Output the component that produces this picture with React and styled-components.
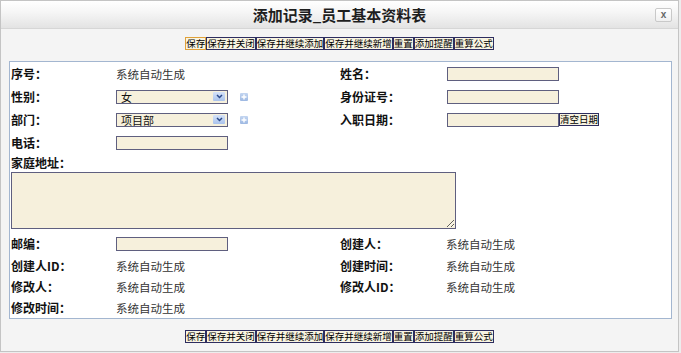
import React from "react";
import styled, { createGlobalStyle } from "styled-components";

const GlobalStyle = createGlobalStyle`
  html, body { margin: 0; padding: 0; background: #ededed; }
  body { font-family: "Noto Sans CJK SC", "Noto Sans", sans-serif; }
  * { box-sizing: border-box; }
`;

const Dialog = styled.div`
  width: 679px;
  height: 352px;
  border: 1px solid #c4c4c4;
  background: #f4f4f4;
  display: flex;
  flex-direction: column;
`;

const TitleBar = styled.div`
  flex: none;
  height: 28px;
  display: grid;
  grid-template-columns: 1fr auto 1fr;
  align-items: center;
  background: linear-gradient(#ffffff 0%, #f6f6f6 40%, #e3e3e3 100%);
  border-bottom: 1px solid #d6d6d6;
`;

const Title = styled.div`
  grid-column: 2;
  font-size: 15px;
  font-weight: 700;
  color: #1e1e1e;
  line-height: 1;
`;

const CloseButton = styled.div`
  grid-column: 3;
  justify-self: end;
  margin-right: 6px;
  width: 17px;
  height: 14px;
  border: 1px solid #c9c9c9;
  border-radius: 2px;
  background: linear-gradient(#ffffff, #f0f0f0);
  display: flex;
  align-items: center;
  justify-content: center;
  font-family: "Liberation Sans", sans-serif;
  font-size: 10px;
  font-weight: 700;
  color: #666;
  line-height: 1;
`;

const ButtonBar = styled.div`
  flex: none;
  display: flex;
  justify-content: center;
  margin-top: ${(p) => p.$top}px;
  height: 13px;
`;

const ToolButton = styled.button`
  height: 13px;
  margin: 0;
  padding: 0;
  border: 1px solid ${(p) => (p.$focus ? "#e0a13a" : "#2d2d5f")};
  background: #f8f4e1;
  color: #000;
  font-family: "Noto Sans CJK SC", sans-serif;
  font-size: 9.5px;
  line-height: 11px;
  white-space: nowrap;
`;

const Panel = styled.div`
  flex: none;
  margin: 11px 6px 0 8px;
  height: 258px;
  border: 1px solid #a3b6d0;
  background: #ffffff;
  padding-left: 1px;
`;

const Row = styled.div`
  display: grid;
  grid-template-columns: 105px 224px 106px 1fr;
  align-items: ${(p) => p.$align || "center"};
  height: ${(p) => p.$h}px;
`;

const Label = styled.span`
  font-size: 12px;
  font-weight: 700;
  color: #111;
  line-height: 14px;
  white-space: nowrap;
`;

const Value = styled.span`
  font-size: 11.5px;
  color: #333;
  line-height: 14px;
  white-space: nowrap;
`;

const TextInput = styled.input`
  display: block;
  width: 112px;
  height: 14px;
  margin: 0 0 0 ${(p) => p.$ml || 0}px;
  padding: 0 3px;
  border: 1px solid #5f5f7f;
  background: #f6f0dc;
  font-size: 11px;
`;

const FieldGroup = styled.div`
  display: flex;
  align-items: center;
  gap: ${(p) => p.$gap || 0}px;
  margin-left: ${(p) => p.$ml || 0}px;
`;

const SelectBox = styled.div`
  width: 112px;
  height: 14px;
  border: 1px solid #5f5f7f;
  background: #f6f0dc;
  display: flex;
  align-items: center;
  padding-left: 4px;
`;

const SelectText = styled.span`
  font-size: 11px;
  color: #111;
  line-height: 12px;
  flex: 1;
`;

const ArrowBox = styled.span`
  width: 12px;
  height: 9px;
  margin-right: 2px;
  border-radius: 1px;
  background: linear-gradient(#d6e3f9, #a9c2ec);
  display: flex;
  align-items: center;
  justify-content: center;
`;

const PlusIcon = styled.span`
  width: 8px;
  height: 8px;
  border-radius: 1px;
  background: linear-gradient(#c4d6f1, #9db8e2);
  display: flex;
  align-items: center;
  justify-content: center;
`;

const SmallButton = styled.button`
  height: 13px;
  margin: 0;
  padding: 0;
  border: 1px solid #2d2d5f;
  background: #f8f4e1;
  color: #000;
  font-family: "Noto Sans CJK SC", sans-serif;
  font-size: 9.5px;
  line-height: 11px;
  white-space: nowrap;
`;

const TextArea = styled.textarea`
  grid-column: 1 / -1;
  display: block;
  width: 445px;
  height: 57px;
  margin: 0;
  border: 1px solid #5f5f7f;
  background: #f6f0dc;
  resize: both;
`;

const buttons = ["保存", "保存并关闭", "保存并继续添加", "保存并继续新增", "重置", "添加提醒", "重算公式"];

function Buttons({ top, focusFirst }) {
  return (
    <ButtonBar $top={top}>
      {buttons.map((b, i) => (
        <ToolButton key={b} $focus={focusFirst && i === 0}>
          {b}
        </ToolButton>
      ))}
    </ButtonBar>
  );
}

function Select({ value }) {
  return (
    <FieldGroup $gap={12}>
      <SelectBox>
        <SelectText>{value}</SelectText>
        <ArrowBox>
          <svg width="7" height="5" viewBox="0 0 7 5">
            <path d="M1 1 L3.5 3.5 L6 1" fill="none" stroke="#2c4a8a" strokeWidth="1.5" />
          </svg>
        </ArrowBox>
      </SelectBox>
      <PlusIcon>
        <svg width="6" height="6" viewBox="0 0 6 6">
          <path d="M3 0.5 V5.5 M0.5 3 H5.5" stroke="#fff" strokeWidth="1.4" />
        </svg>
      </PlusIcon>
    </FieldGroup>
  );
}

export default function App() {
  return (
    <>
      <GlobalStyle />
      <Dialog>
        <TitleBar>
          <Title>添加记录_员工基本资料表</Title>
          <CloseButton>x</CloseButton>
        </TitleBar>
        <Buttons top={8} focusFirst />
        <Panel>
          <Row $h={23}>
            <Label>序号：</Label>
            <Value>系统自动生成</Value>
            <Label>姓名：</Label>
            <TextInput $ml={1} />
          </Row>
          <Row $h={23}>
            <Label>性别：</Label>
            <Select value="女" />
            <Label>身份证号：</Label>
            <TextInput $ml={1} />
          </Row>
          <Row $h={23}>
            <Label>部门：</Label>
            <Select value="项目部" />
            <Label>入职日期：</Label>
            <FieldGroup $ml={1}>
              <TextInput />
              <SmallButton>清空日期</SmallButton>
            </FieldGroup>
          </Row>
          <Row $h={23}>
            <Label>电话：</Label>
            <TextInput />
          </Row>
          <Row $h={18}>
            <Label>家庭地址：</Label>
          </Row>
          <Row $h={60} $align="start">
            <TextArea />
          </Row>
          <Row $h={23}>
            <Label>邮编：</Label>
            <TextInput />
            <Label>创建人：</Label>
            <Value>系统自动生成</Value>
          </Row>
          <Row $h={21}>
            <Label>创建人ID：</Label>
            <Value>系统自动生成</Value>
            <Label>创建时间：</Label>
            <Value>系统自动生成</Value>
          </Row>
          <Row $h={21}>
            <Label>修改人：</Label>
            <Value>系统自动生成</Value>
            <Label>修改人ID：</Label>
            <Value>系统自动生成</Value>
          </Row>
          <Row $h={21}>
            <Label>修改时间：</Label>
            <Value>系统自动生成</Value>
          </Row>
        </Panel>
        <Buttons top={11} />
      </Dialog>
    </>
  );
}
